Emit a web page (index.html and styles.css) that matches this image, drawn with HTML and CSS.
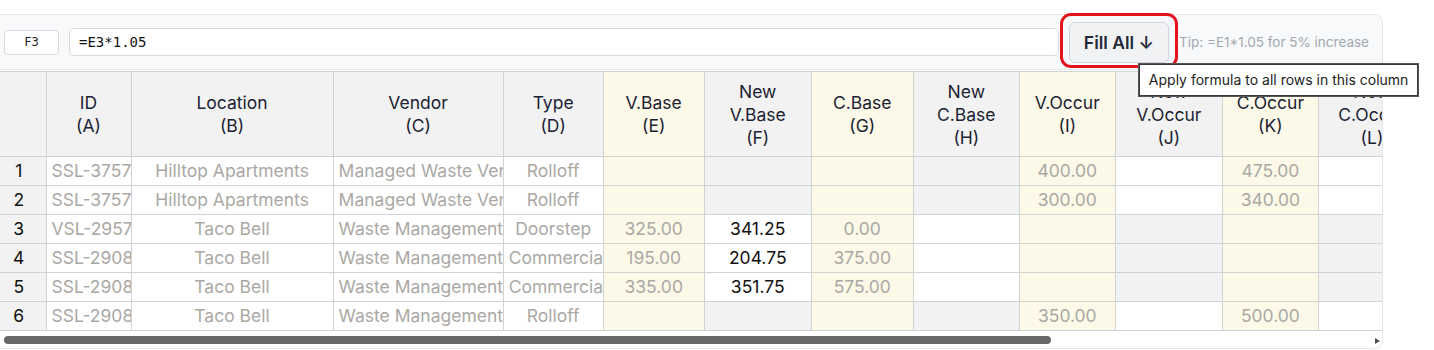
FILE: index.html
```html
<!DOCTYPE html>
<html lang="en">
<head>
    <meta charset="UTF-8">
    <meta name="viewport" content="width=device-width, initial-scale=1.0">
    <title>Rate Sheet</title>
    <link rel="stylesheet" href="styles.css">
</head>
<body>
    <div class="sheet">
        <div class="toolbar">
            <div class="cell-ref">F3</div>
            <div class="formula">=E3*1.05</div>
            <div class="fill-wrap">
                <button class="fill-btn">Fill All ↓</button>
                <div class="tooltip">Apply formula to all rows in this column</div>
            </div>
            <span class="tip">Tip: =E1*1.05 for 5% increase</span>
        </div>

        <div class="grid-scroll">
            <table class="grid">
                <colgroup>
                    <col class="c-num">
                    <col class="c-id">
                    <col class="c-loc">
                    <col class="c-vendor">
                    <col class="c-type">
                    <col class="c-vb">
                    <col class="c-nvb">
                    <col class="c-cb">
                    <col class="c-ncb">
                    <col class="c-vo">
                    <col class="c-nvo">
                    <col class="c-co">
                    <col class="c-nco">
                </colgroup>
                <thead>
                    <tr>
                        <th class="num"></th>
                        <th>ID<br>(A)</th>
                        <th>Location<br>(B)</th>
                        <th>Vendor<br>(C)</th>
                        <th>Type<br>(D)</th>
                        <th class="cur">V.Base<br>(E)</th>
                        <th>New<br>V.Base<br>(F)</th>
                        <th class="cur">C.Base<br>(G)</th>
                        <th>New<br>C.Base<br>(H)</th>
                        <th class="cur">V.Occur<br>(I)</th>
                        <th>New<br>V.Occur<br>(J)</th>
                        <th class="cur">C.Occur<br>(K)</th>
                        <th>New<br>C.Occur<br>(L)</th>
                    </tr>
                </thead>
                <tbody>
                    <tr>
                        <td class="num">1</td>
                        <td class="left">SSL-375701</td>
                        <td>Hilltop Apartments</td>
                        <td class="left">Managed Waste Vendor</td>
                        <td>Rolloff</td>
                        <td class="cur"></td>
                        <td class="na"></td>
                        <td class="cur"></td>
                        <td class="na"></td>
                        <td class="cur">400.00</td>
                        <td class="new"></td>
                        <td class="cur">475.00</td>
                        <td class="new"></td>
                    </tr>
                    <tr>
                        <td class="num">2</td>
                        <td class="left">SSL-375702</td>
                        <td>Hilltop Apartments</td>
                        <td class="left">Managed Waste Vendor</td>
                        <td>Rolloff</td>
                        <td class="cur"></td>
                        <td class="na"></td>
                        <td class="cur"></td>
                        <td class="na"></td>
                        <td class="cur">300.00</td>
                        <td class="new"></td>
                        <td class="cur">340.00</td>
                        <td class="new"></td>
                    </tr>
                    <tr>
                        <td class="num">3</td>
                        <td class="left">VSL-295714</td>
                        <td>Taco Bell</td>
                        <td class="left">Waste Management</td>
                        <td>Doorstep</td>
                        <td class="cur">325.00</td>
                        <td class="new">341.25</td>
                        <td class="cur">0.00</td>
                        <td class="new"></td>
                        <td class="cur"></td>
                        <td class="na"></td>
                        <td class="cur"></td>
                        <td class="na"></td>
                    </tr>
                    <tr>
                        <td class="num">4</td>
                        <td class="left">SSL-290811</td>
                        <td>Taco Bell</td>
                        <td class="left">Waste Management</td>
                        <td class="left">Commercial</td>
                        <td class="cur">195.00</td>
                        <td class="new">204.75</td>
                        <td class="cur">375.00</td>
                        <td class="new"></td>
                        <td class="cur"></td>
                        <td class="na"></td>
                        <td class="cur"></td>
                        <td class="na"></td>
                    </tr>
                    <tr>
                        <td class="num">5</td>
                        <td class="left">SSL-290812</td>
                        <td>Taco Bell</td>
                        <td class="left">Waste Management</td>
                        <td class="left">Commercial</td>
                        <td class="cur">335.00</td>
                        <td class="new">351.75</td>
                        <td class="cur">575.00</td>
                        <td class="new"></td>
                        <td class="cur"></td>
                        <td class="na"></td>
                        <td class="cur"></td>
                        <td class="na"></td>
                    </tr>
                    <tr>
                        <td class="num">6</td>
                        <td class="left">SSL-290813</td>
                        <td>Taco Bell</td>
                        <td class="left">Waste Management</td>
                        <td>Rolloff</td>
                        <td class="cur"></td>
                        <td class="na"></td>
                        <td class="cur"></td>
                        <td class="na"></td>
                        <td class="cur">350.00</td>
                        <td class="new"></td>
                        <td class="cur">500.00</td>
                        <td class="new"></td>
                    </tr>
                </tbody>
            </table>
        </div>

        <div class="hscroll">
            <div class="thumb"></div>
            <span class="arrow"></span>
        </div>
    </div>
</body>
</html>
```

FILE: styles.css
```css
body {
    margin: 0;
    background: #ffffff;
    font-family: Inter, "Noto Sans", sans-serif;
    overflow: hidden;
}

.sheet {
    width: 1390px;
    margin: 14px 0 0 -9px;
    border: 1px solid #e3e5e8;
    border-radius: 8px;
    background: #ffffff;
}

.toolbar {
    display: flex;
    align-items: center;
    gap: 10px;
    height: 54px;
    padding: 0 13px 0 12px;
    background: #f8f9fa;
    border-bottom: 1px solid #e5e7eb;
    border-radius: 8px 8px 0 0;
}

.cell-ref {
    width: 53px;
    height: 23px;
    line-height: 23px;
    text-align: center;
    border: 1px solid #d6d9de;
    border-radius: 4px;
    background: #ffffff;
    font-family: "DejaVu Sans Mono", monospace;
    font-size: 12px;
    color: #222;
}

.formula {
    flex: 1;
    height: 26px;
    line-height: 26px;
    padding: 0 9px;
    border: 1px solid #d6d9de;
    border-radius: 5px;
    background: #ffffff;
    font-family: "DejaVu Sans Mono", monospace;
    font-size: 14px;
    color: #111;
}

.fill-wrap {
    position: relative;
}

.fill-wrap::before {
    content: "";
    position: absolute;
    top: -9px;
    bottom: -5px;
    left: -9px;
    right: -9px;
    border: 3px solid #e3141c;
    border-radius: 11px;
    pointer-events: none;
}

.fill-btn {
    display: block;
    height: 41px;
    padding: 0 14px;
    border: 1px solid #d1d5db;
    border-radius: 6px;
    background: #f1f2f4;
    font-family: Inter, "Noto Sans", sans-serif;
    font-size: 17.5px;
    font-weight: 600;
    color: #1f2937;
}

.tooltip {
    position: absolute;
    top: 42px;
    left: 70px;
    z-index: 5;
    white-space: nowrap;
    padding: 0 9px;
    height: 30px;
    line-height: 30px;
    border: 1px solid #3a3a3a;
    box-shadow: 0 0 0 1px #555;
    background: #ffffff;
    font-size: 14px;
    color: #222;
}

.tip {
    font-size: 13.5px;
    color: #a3a8b0;
    white-space: nowrap;
}

.grid-scroll {
    overflow: hidden;
    padding-top: 1px;
}

.grid {
    width: 1434px;
    table-layout: fixed;
    border-collapse: collapse;
    font-size: 17.5px;
}

.c-num { width: 54px; }
.c-id { width: 85px; }
.c-loc { width: 202px; }
.c-vendor { width: 170px; }
.c-type { width: 100px; }
.c-vb { width: 101px; }
.c-nvb { width: 107px; }
.c-cb { width: 102px; }
.c-ncb { width: 106px; }
.c-vo { width: 96px; }
.c-nvo { width: 107px; }
.c-co { width: 96px; }
.c-nco { width: 107px; }

.grid th,
.grid td {
    border: 1px solid #d2d2d2;
    padding: 0 5px;
    text-align: center;
    white-space: nowrap;
    overflow: hidden;
}

.grid th {
    height: 84px;
    line-height: 23px;
    font-weight: 400;
    color: #1b2233;
    background: #f2f2f2;
}

.grid td {
    height: 28px;
    line-height: 28px;
    color: #aaa8a4;
    background: #ffffff;
}

.grid th:first-child,
.grid td:first-child {
    border-left: none;
}

.grid .num {
    background: #f2f2f2;
    color: #111;
}

.grid .left {
    text-align: left;
}

.grid .cur {
    background: #fdf9e8;
}

.grid .new {
    color: #111;
}

.grid .na {
    background: #f1f2f4;
}

.hscroll {
    position: relative;
    height: 17px;
}

.thumb {
    position: absolute;
    top: 5px;
    left: 12px;
    width: 1047px;
    height: 8px;
    border-radius: 4px;
    background: #686868;
}

.arrow {
    position: absolute;
    top: 7px;
    right: 2px;
    width: 0;
    height: 0;
    border-top: 3.5px solid transparent;
    border-bottom: 3.5px solid transparent;
    border-left: 5px solid #505050;
}
```
